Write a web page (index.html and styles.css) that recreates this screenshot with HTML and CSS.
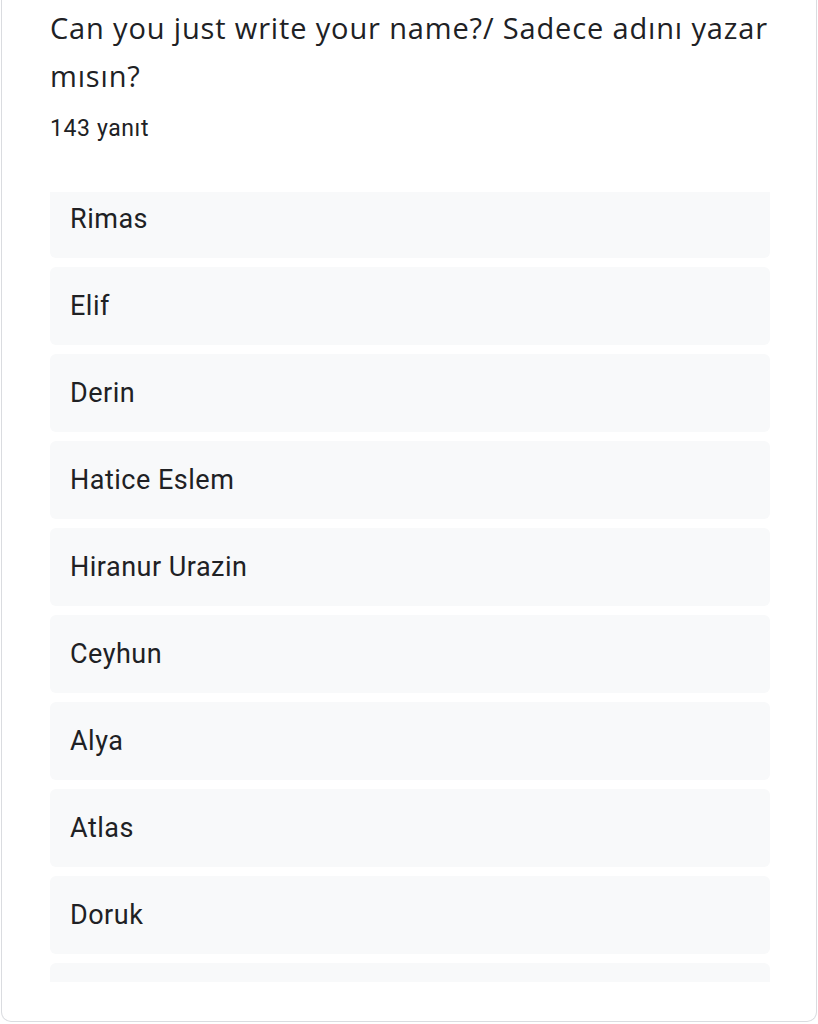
FILE: index.html
```html
<!DOCTYPE html>
<html lang="tr">
<head>
<meta charset="UTF-8" />
<meta name="viewport" content="width=device-width, initial-scale=1" />
<title>Yanıtlar</title>
<link rel="stylesheet" href="styles.css">
</head>
<body>

<!-- Question card -->
<div class="card">
  <h1 class="question">Can you just write your name?/ Sadece adını yazar mısın?</h1>
  <div class="count">143 yanıt</div>

  <!-- Scrollable answer list -->
  <div class="answers">
    <div class="answer-list">
      <div class="answer">Rimas</div>
      <div class="answer">Elif</div>
      <div class="answer">Derin</div>
      <div class="answer">Hatice Eslem</div>
      <div class="answer">Hiranur Urazin</div>
      <div class="answer">Ceyhun</div>
      <div class="answer">Alya</div>
      <div class="answer">Atlas</div>
      <div class="answer">Doruk</div>
      <div class="answer"></div>
    </div>
  </div>
</div>

</body>
</html>
```

FILE: styles.css
```css
/* Base */
body, html {
  margin: 0; padding: 0;
  background: #ffffff;
  font-family: Roboto, Arial, sans-serif;
  color: #202124;
  overflow: hidden;
}

/* Card */
.card {
  margin: 0 1px;
  height: 1022px;
  box-sizing: border-box;
  background: #fff;
  border: 1px solid #dadce0;
  border-top: none;
  border-radius: 0 0 10px 10px;
  padding: 4px 46px 0 48px;
}
.question {
  margin: 0;
  font-family: "Open Sans", Roboto, Arial, sans-serif;
  font-weight: 400;
  font-size: 29px;
  line-height: 48px;
  letter-spacing: 0.85px;
  color: #202124;
}
.count {
  margin-top: 13px;
  font-size: 23px;
  line-height: 32px;
  letter-spacing: 0.6px;
  color: #202124;
}

/* Answers */
.answers {
  margin-top: 47px;
  height: 790px;
  overflow: hidden;
}
.answer-list {
  margin-top: -12px;
  display: flex;
  flex-direction: column;
  gap: 9px;
}
.answer {
  height: 78px;
  box-sizing: border-box;
  display: flex;
  align-items: center;
  padding: 0 20px;
  background: #f8f9fa;
  border-radius: 6px;
  font-size: 27px;
  letter-spacing: 0.5px;
  color: #202124;
}
```
